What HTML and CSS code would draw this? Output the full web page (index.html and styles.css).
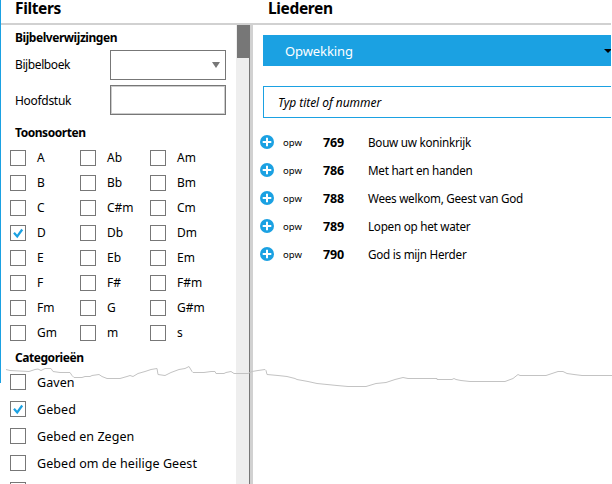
FILE: index.html
```html
<!DOCTYPE html>
<html lang="nl">
<head>
<meta charset="utf-8">
<title>Liederen</title>
<link rel="stylesheet" href="styles.css">
</head>
<body>
<div class="app">
  <header class="head"><h1 class="h-filters">Filters</h1><h1 class="h-songs">Liederen</h1></header>
  <div class="main">
    <aside class="filters">
      <h2 class="t-bible">Bijbelverwijzingen</h2>
      <div class="field"><span class="f-book">Bijbelboek</span><div class="box"><svg width="8" height="6" viewBox="0 0 8 6"><path d="M0 0h8L4 6z" fill="#777"/></svg></div></div>
      <div class="field"><span class="f-chapter">Hoofdstuk</span><div class="box plain"></div></div>
      <h2 class="t-keys">Toonsoorten</h2>
      <div class="keys">
        <label><i></i>A</label><label><i></i>Ab</label><label><i></i>Am</label>
        <label><i></i>B</label><label><i></i>Bb</label><label><i></i>Bm</label>
        <label><i></i>C</label><label><i></i>C#m</label><label><i></i>Cm</label>
        <label><i><svg viewBox="0 0 14 14"><path d="M3 6.8L6.2 10.5L11.2 3.5"/></svg></i>D</label><label><i></i>Db</label><label><i></i>Dm</label>
        <label><i></i>E</label><label><i></i>Eb</label><label><i></i>Em</label>
        <label><i></i>F</label><label><i></i>F#</label><label><i></i>F#m</label>
        <label><i></i>Fm</label><label><i></i>G</label><label><i></i>G#m</label>
        <label><i></i>Gm</label><label><i></i>m</label><label><i></i>s</label>
      </div>
      <h2 class="t-cats">Categorieën</h2>
      <div class="cats">
        <label><i></i>Gaven</label>
        <label><i><svg viewBox="0 0 14 14"><path d="M3 6.8L6.2 10.5L11.2 3.5"/></svg></i>Gebed</label>
        <label><i></i>Gebed en Zegen</label>
        <label><i></i>Gebed om de heilige Geest</label>
        <label><i></i></label>
      </div>
    </aside>
    <div class="scroll"><div class="thumb"></div></div>
    <section class="songs">
      <div class="book"><span>Opwekking</span><svg width="8" height="4" viewBox="0 0 8 4"><path d="M0 0h8L4 4z"/></svg></div>
      <div class="search"><span>Typ titel of nummer</span></div>
      <div class="list">
        <div class="song"><svg viewBox="0 0 14 14"><circle cx="7" cy="7" r="7"/><path d="M7 2.7v8.6M2.7 7h8.6"/></svg><small>opw</small><b>769</b><span>Bouw uw koninkrijk</span></div>
        <div class="song"><svg viewBox="0 0 14 14"><circle cx="7" cy="7" r="7"/><path d="M7 2.7v8.6M2.7 7h8.6"/></svg><small>opw</small><b>786</b><span>Met hart en handen</span></div>
        <div class="song"><svg viewBox="0 0 14 14"><circle cx="7" cy="7" r="7"/><path d="M7 2.7v8.6M2.7 7h8.6"/></svg><small>opw</small><b>788</b><span>Wees welkom, Geest van God</span></div>
        <div class="song"><svg viewBox="0 0 14 14"><circle cx="7" cy="7" r="7"/><path d="M7 2.7v8.6M2.7 7h8.6"/></svg><small>opw</small><b>789</b><span>Lopen op het water</span></div>
        <div class="song"><svg viewBox="0 0 14 14"><circle cx="7" cy="7" r="7"/><path d="M7 2.7v8.6M2.7 7h8.6"/></svg><small>opw</small><b>790</b><span>God is mijn Herder</span></div>
      </div>
    </section>
  </div>
  <div class="edge"></div>
  <svg class="tear" width="612" height="24" viewBox="0 362 612 24"><path d="M6 369L10 370L29 371L32 370L35 369L38 368.5L41 370L45 368H51L53 371L60 372H70L72 375L74 377H82L85 376H90L92 375L99 374L102 376L107 378H120L127 376L130 375L133 376L138 373L145 371L151 369L157 368L158 374L165 375L171 372L179 369L185 368L189 366L192 371L193 372H204L211 371H215L216 373H224L226 372L231 371L234 373H248L252 371L258 370L265 369L266 370L267 374L278 375L287 376L295 378L297 379L308 381L317 383L337 385L348 386H366L376 383L386 382L395 379L403 377L408 378H437V379H452L454 378L456 379L461 380L470 381H505L513 378L518 374L520 375H546L552 373L558 371H563L567 373L574 374L582 375H612"/></svg>
</div>
</body>
</html>
```
FILE: styles.css
```css
* { box-sizing: border-box; }
body { margin: 0; background: #fff; color: #000; font: 12px/16px "Noto Sans", "Open Sans", sans-serif; }
.app { position: relative; width: 612px; height: 484px; overflow: hidden; padding: 0 1px; }
h1, h2 { margin: 0; white-space: nowrap; }
span, label { white-space: nowrap; }
.head { display: flex; height: 25px; border-bottom: 2px solid #d1d1d1; }
h1 { font-size: 15.5px; line-height: 16px; letter-spacing: -0.35px; }
.h-filters { width: 253px; padding-left: 14px; }
.h-songs { padding-left: 14px; }
.main { display: flex; height: 459px; }
.filters { width: 235px; padding: 5px 0 0 9px; overflow: hidden; }
h2 { padding-left: 5px; font-size: 12px; line-height: 16px; letter-spacing: -0.45px; }
.field { display: flex; align-items: center; height: 30px; margin: 4px 10px 5px 5px; justify-content: space-between; }
.field + .field { margin-top: 0; }
.f-book { letter-spacing: -0.4px; }
.f-chapter { padding-top: 2px; letter-spacing: -0.3px; }
.box { display: flex; justify-content: flex-end; align-items: center; width: 116px; height: 30px; padding-right: 5px; border: 1px solid #777; }
.plain { box-shadow: inset 0 0 0 1px #ccc; }
.t-keys { margin-top: 10px; }
.keys { display: grid; grid-template-columns: repeat(3, 70px); grid-auto-rows: 25px; margin-top: 4px; }
label { display: flex; align-items: center; }
label i { display: block; flex: none; width: 16px; height: 16px; margin-right: 11px; border: 1px solid #777; }
label svg { display: block; width: 14px; height: 14px; fill: none; stroke: #1ba1e2; stroke-width: 2.2; }
.t-cats { margin-top: 5px; }
.cats { display: grid; grid-auto-rows: 27px; margin-top: 2px; }
.cats label { height: 29px; font-size: 12.5px; letter-spacing: 0.06px; }
.cats i { margin-bottom: 2px; }
.scroll { width: 17px; padding-left: 1px; background: #eee; border-right: 3px solid #d1d1d1; box-shadow: inset -1px 0 #777; }
.thumb { width: 13px; height: 33px; background: #777; }
.songs { flex: 1; padding: 10px 0 0 10px; }
.book { display: flex; align-items: center; justify-content: space-between; height: 31px; padding-left: 22px; background: #1ba1e2; color: #fff; font-size: 13px; letter-spacing: -0.1px; overflow: hidden; }
.book svg { margin-right: -1px; }
.search { display: flex; align-items: center; height: 32px; margin-top: 20px; padding: 2px 0 0 14px; border: 1px solid #1ba1e2; border-right: 0; font-style: italic; letter-spacing: -0.05px; }
.list { margin: 10px 0 0 -3px; }
.song { display: grid; grid-template-columns: 23px 40px 45px 1fr; align-items: center; height: 28px; }
.song svg { width: 14px; height: 14px; fill: #1ba1e2; stroke: #fff; stroke-width: 2; }
.song circle { stroke: none; }
.song small, .song b { padding-top: 2px; }
.song b { font-size: 12.5px; letter-spacing: -0.15px; }
.song span { font-size: 11.7px; letter-spacing: -0.26px; }
small { font-size: 9.5px; }
.edge { position: absolute; left: 0; top: 0; width: 1px; height: 383px; background: #1ba1e2; }
.tear { position: absolute; left: 0; top: 362px; overflow: visible; }
.tear path { fill: none; stroke: #c3c3c3; stroke-width: 1; transform: translateY(0.5px); }
```
